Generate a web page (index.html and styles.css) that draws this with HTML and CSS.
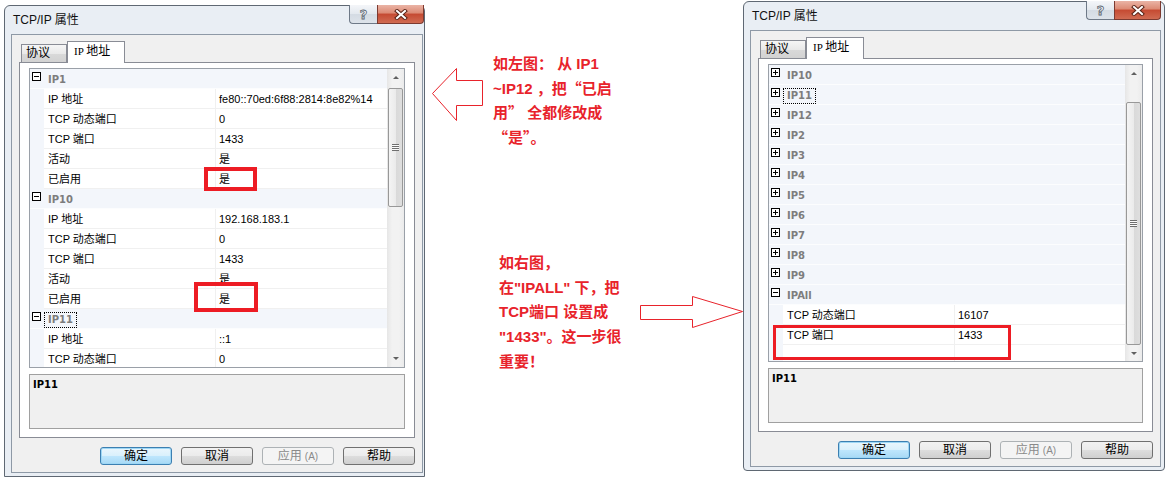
FILE: index.html
```html
<!DOCTYPE html>
<html lang="zh-CN">
<head>
<meta charset="utf-8">
<title>TCP/IP 属性</title>
<link rel="stylesheet" href="styles.css">
</head>
<body>
<div class="page">

  <div class="win win-l">
    <div class="titlebar">
      <span class="title-text">TCP/IP 属性</span>
      <div class="caps caps-l">
        <span class="cap cap-help">?</span>
        <span class="cap cap-close"><svg width="14" height="11" viewBox="0 0 14 11"><path d="M3 2 L11 9 M11 2 L3 9" stroke="#5a2418" stroke-width="4" stroke-linecap="square"/><path d="M3 2 L11 9 M11 2 L3 9" stroke="#fff" stroke-width="2" stroke-linecap="square"/></svg></span>
      </div>
    </div>
    <div class="frame frame-l">
      <div class="client">
        <div class="tabs">
          <div class="tab">协议</div>
          <div class="tab tab-sel"><span class="tab-lat">IP </span>地址</div>
        </div>
        <div class="tabpage">
          <div class="pg">
            <div class="pg-rows">
              <div class="row cat"><span class="exp minus"></span><span class="cat-label">IP1</span></div>
              <div class="row prop"><span class="m"></span><span class="k">IP 地址</span><span class="v">fe80::70ed:6f88:2814:8e82%14</span></div>
              <div class="row prop"><span class="m"></span><span class="k">TCP 动态端口</span><span class="v">0</span></div>
              <div class="row prop"><span class="m"></span><span class="k">TCP 端口</span><span class="v">1433</span></div>
              <div class="row prop"><span class="m"></span><span class="k">活动</span><span class="v">是</span></div>
              <div class="row prop"><span class="m"></span><span class="k">已启用</span><span class="v">是</span></div>
              <div class="row cat"><span class="exp minus"></span><span class="cat-label">IP10</span></div>
              <div class="row prop"><span class="m"></span><span class="k">IP 地址</span><span class="v">192.168.183.1</span></div>
              <div class="row prop"><span class="m"></span><span class="k">TCP 动态端口</span><span class="v">0</span></div>
              <div class="row prop"><span class="m"></span><span class="k">TCP 端口</span><span class="v">1433</span></div>
              <div class="row prop"><span class="m"></span><span class="k">活动</span><span class="v">是</span></div>
              <div class="row prop"><span class="m"></span><span class="k">已启用</span><span class="v">是</span></div>
              <div class="row cat"><span class="exp minus"></span><span class="cat-label focus">IP11</span></div>
              <div class="row prop"><span class="m"></span><span class="k">IP 地址</span><span class="v">::1</span></div>
              <div class="row prop"><span class="m"></span><span class="k">TCP 动态端口</span><span class="v">0</span></div>
            </div>
            <div class="sb">
              <div class="sb-btn"><span class="arr-up"></span></div>
              <div class="sb-track"><div class="thumb thumb-l"><span class="grip"></span></div></div>
              <div class="sb-btn"><span class="arr-down"></span></div>
            </div>
            <div class="mark mark-1"></div>
            <div class="mark mark-2"></div>
          </div>
          <div class="desc">IP11</div>
        </div>
        <div class="btns">
          <span class="btn btn-def">确定</span>
          <span class="btn">取消</span>
          <span class="btn btn-dis">应用<span class="acc">(A)</span></span>
          <span class="btn">帮助</span>
        </div>
      </div>
    </div>
  </div>

  <div class="notes">
    <svg class="arrows" width="318" height="477" viewBox="0 0 318 477">
      <polygon points="7.5,93.5 31.5,68.5 31.5,80.5 57.5,80.5 57.5,105.5 31.5,105.5 31.5,120.5" fill="#fff" stroke="#e8232b" stroke-width="1"/>
      <polygon points="215.5,305.5 267.5,305.5 267.5,296.5 317.5,311.5 267.5,327.5 267.5,319.5 215.5,319.5" fill="#fff" stroke="#e8232b" stroke-width="1"/>
    </svg>
    <p class="note note-l">如左图： 从 IP1<br>~IP12 ，把<span class="cj">“</span>已启<br>用<span class="cj">”</span> 全都修改成<br><span class="cj">“</span>是<span class="cj">”</span>。</p>
    <p class="note note-r">如右图，<br>在"IPALL" 下，把<br>TCP端口 设置成<br>"1433"。这一步很<br>重要！</p>
  </div>

  <div class="win win-r">
    <div class="titlebar">
      <span class="title-text">TCP/IP 属性</span>
      <div class="caps caps-r">
        <span class="cap cap-help">?</span>
        <span class="cap cap-close"><svg width="14" height="11" viewBox="0 0 14 11"><path d="M3 2 L11 9 M11 2 L3 9" stroke="#5a2418" stroke-width="4" stroke-linecap="square"/><path d="M3 2 L11 9 M11 2 L3 9" stroke="#fff" stroke-width="2" stroke-linecap="square"/></svg></span>
      </div>
    </div>
    <div class="frame frame-r">
      <div class="client">
        <div class="tabs">
          <div class="tab">协议</div>
          <div class="tab tab-sel"><span class="tab-lat">IP </span>地址</div>
        </div>
        <div class="tabpage">
          <div class="pg">
            <div class="pg-rows">
              <div class="row cat"><span class="exp plus"></span><span class="cat-label">IP10</span></div>
              <div class="row cat"><span class="exp plus"></span><span class="cat-label focus">IP11</span></div>
              <div class="row cat"><span class="exp plus"></span><span class="cat-label">IP12</span></div>
              <div class="row cat"><span class="exp plus"></span><span class="cat-label">IP2</span></div>
              <div class="row cat"><span class="exp plus"></span><span class="cat-label">IP3</span></div>
              <div class="row cat"><span class="exp plus"></span><span class="cat-label">IP4</span></div>
              <div class="row cat"><span class="exp plus"></span><span class="cat-label">IP5</span></div>
              <div class="row cat"><span class="exp plus"></span><span class="cat-label">IP6</span></div>
              <div class="row cat"><span class="exp plus"></span><span class="cat-label">IP7</span></div>
              <div class="row cat"><span class="exp plus"></span><span class="cat-label">IP8</span></div>
              <div class="row cat"><span class="exp plus"></span><span class="cat-label">IP9</span></div>
              <div class="row cat"><span class="exp minus"></span><span class="cat-label">IPAll</span></div>
              <div class="row prop"><span class="m"></span><span class="k">TCP 动态端口</span><span class="v">16107</span></div>
              <div class="row prop"><span class="m"></span><span class="k">TCP 端口</span><span class="v">1433</span></div>
              <div class="row prop blank"><span class="m"></span><span class="k"></span><span class="v"></span></div>
            </div>
            <div class="sb">
              <div class="sb-btn"><span class="arr-up"></span></div>
              <div class="sb-track"><div class="thumb thumb-r"><span class="grip"></span></div></div>
              <div class="sb-btn"><span class="arr-down"></span></div>
            </div>
            <div class="mark mark-3"></div>
          </div>
          <div class="desc">IP11</div>
        </div>
        <div class="btns">
          <span class="btn btn-def">确定</span>
          <span class="btn">取消</span>
          <span class="btn btn-dis">应用<span class="acc">(A)</span></span>
          <span class="btn">帮助</span>
        </div>
      </div>
    </div>
  </div>

</div>
</body>
</html>
```

FILE: styles.css
```css
* { box-sizing: border-box; }

body {
  margin: 0;
  background: #fff;
  font-family: "Liberation Sans", "Noto Sans CJK SC", sans-serif;
  font-size: 11px;
  color: #000;
}

.page {
  display: flex;
  align-items: flex-start;
  width: 1166px;
  height: 477px;
  overflow: hidden;
}

/* ---------- window ---------- */
.win {
  flex: none;
  border: 1px solid #5f6873;
  border-radius: 6px 6px 0 0;
  background: #e9eef4;
}
.win-l { width: 421px; margin: 5px 0 0 4px; }
.win-r { width: 422px; margin-top: 1px; border-radius: 6px 6px 4px 4px; }

.titlebar {
  height: 28px;
  display: flex;
  align-items: flex-start;
}
.title-text {
  margin: 7px 0 0 8px;
  font-size: 12px;
  line-height: 14px;
  color: #111;
}
.caps {
  margin-left: auto;
  margin-top: -1px;
  display: flex;
}
.caps-l { margin-right: 0; }
.caps-r { margin-right: 3px; }
.cap {
  height: 19px;
  display: flex;
  align-items: center;
  justify-content: center;
  border: 1px solid #6e7987;
  border-top: none;
}
.cap-help {
  width: 28px;
  border-radius: 0 0 0 4px;
  border-right: none;
  background: linear-gradient(#f4f6f9, #e3e8ee 50%, #d4dbe3 51%, #dde3ea);
  font-family: "DejaVu Sans", sans-serif;
  font-weight: bold;
  font-size: 13px;
  color: #f4f6f8;
  -webkit-text-stroke: 0.8px #5b6571;
}
.cap-close {
  width: 47px;
  border-radius: 0 0 4px 0;
  border-color: #7c3a30;
  background: linear-gradient(#eab4a6, #dc8a74 45%, #c54a32 50%, #d06b52);
}

.frame { padding: 0 1px 3px 6px; }
.frame-r { padding-right: 3px; }

.client {
  background: #f0f0f0;
  border: 1px solid #8e99a6;
  padding: 6px 7px 7px 7px;
}

/* ---------- tabs ---------- */
.tabs {
  display: flex;
  align-items: flex-end;
  height: 22px;
  padding-left: 2px;
  margin-bottom: -1px;
  position: relative;
  z-index: 1;
}
.tab {
  width: 46px;
  height: 18px;
  margin-bottom: 1px;
  border: 1px solid #898c95;
  border-bottom: none;
  background: linear-gradient(#f6f6f6, #e9e9e9 50%, #d9d9d9 51%, #d2d2d2);
  font-size: 12px;
  line-height: 16px;
  padding-left: 4px;
}
.tab-sel {
  width: 58px;
  height: 22px;
  margin-bottom: 0;
  background: #fff;
  line-height: 19px;
  padding-left: 6px;
}
.tab-lat { font-family: "Liberation Serif", serif; font-size: 11px; }

.tabpage {
  background: #fff;
  border: 1px solid #898c95;
  padding: 5px 9px 8px 9px;
  display: flex;
  flex-direction: column;
  gap: 6px;
}

/* ---------- property grid ---------- */
.pg {
  position: relative;
  height: 300px;
  border: 1px solid #9aa0a8;
  display: flex;
  background: #fff;
}
.win-r .pg { height: 298px; }
.pg-rows {
  flex: 1;
  overflow: hidden;
}
.row {
  height: 20px;
  display: flex;
}
.cat {
  background: #f3f6fb;
  border-bottom: 1px solid #fcfdfe;
  align-items: flex-start;
}
.exp {
  position: relative;
  flex: none;
  width: 9px;
  height: 9px;
  margin: 3px 0 0 2px;
  border: 1px solid #000;
  background: #fff;
}
.exp::before {
  content: "";
  position: absolute;
  left: 1px;
  top: 3px;
  width: 5px;
  height: 1px;
  background: #000;
}
.plus::after {
  content: "";
  position: absolute;
  left: 3px;
  top: 1px;
  width: 1px;
  height: 5px;
  background: #000;
}
.cat-label {
  margin: 3px 0 0 3px;
  padding: 0 3px;
  height: 16px;
  line-height: 14px;
  border: 1px dotted transparent;
  font-family: "DejaVu Sans", sans-serif;
  font-weight: bold;
  font-size: 10px;
  color: #7d7d7d;
}
.cat-label.focus { border-color: #000; }

.prop {
  display: grid;
  grid-template-columns: 14px 172px 1fr;
}
.prop .m { background: #f3f6fb; }
.prop .k,
.prop .v {
  border-bottom: 1px solid #f0f0f0;
  padding-top: 3px;
  line-height: 15px;
  white-space: nowrap;
  overflow: hidden;
}
.prop .k { border-right: 1px solid #f0f0f0; padding-left: 4px; }
.prop .v { padding-left: 3px; }
.blank { height: 16px; }
.blank .k, .blank .v { border-bottom: none; }

/* scrollbar */
.sb {
  flex: none;
  width: 17px;
  display: flex;
  flex-direction: column;
  background: linear-gradient(90deg, #e6e6e6, #f2f2f2 30%, #f2f2f2 70%, #ebebeb);
}
.sb-btn {
  flex: none;
  height: 17px;
  display: flex;
  align-items: center;
  justify-content: center;
}
.arr-up {
  border-left: 3px solid transparent;
  border-right: 3px solid transparent;
  border-bottom: 3px solid #606060;
}
.arr-down {
  border-left: 3px solid transparent;
  border-right: 3px solid transparent;
  border-top: 3px solid #606060;
}
.sb-track {
  flex: 1;
  display: flex;
  flex-direction: column;
  padding: 0 1px;
}
.thumb {
  flex: none;
  border: 1px solid #989898;
  border-radius: 2px;
  background: linear-gradient(90deg, #f4f4f4, #ebebeb 50%, #d9d9d9 51%, #dedede);
  display: flex;
  align-items: center;
  justify-content: center;
}
.thumb-l { margin-top: 2px; height: 119px; }
.thumb-r { margin-top: 20px; height: 243px; }
.grip {
  width: 7px;
  height: 7px;
  background: repeating-linear-gradient(#6f6f6f 0 1px, #fbfbfb 1px 2px);
}

.mark {
  position: absolute;
  border: 4px solid #ed1c24;
}
.mark-1 { left: 174px; top: 98px; width: 53px; height: 24px; }
.mark-2 { left: 164px; top: 213px; width: 64px; height: 30px; }
.mark-3 { left: 4px; top: 260px; width: 238px; height: 35px; border-width: 3px; }

.desc {
  height: 55px;
  background: #f0f0f0;
  border: 1px solid #a0a0a0;
  padding: 4px 3px;
  font-family: "DejaVu Sans", sans-serif;
  font-weight: bold;
  font-size: 10px;
  line-height: 12px;
}

/* ---------- buttons ---------- */
.btns {
  display: flex;
  justify-content: flex-end;
  gap: 9px;
  margin-top: 9px;
  padding-right: 0;
}
.btn {
  width: 72px;
  height: 18px;
  border: 1px solid #707070;
  border-radius: 3px;
  background: linear-gradient(#f2f2f2, #ebebeb 50%, #dddddd 51%, #cfcfcf);
  font-size: 12px;
  line-height: 16px;
  text-align: center;
  color: #000;
}
.btn-def {
  border-color: #3c7fb1;
  background: linear-gradient(#eaf6fd, #d9f0fc 50%, #bee6fd 51%, #a7d9f5);
  box-shadow: inset 0 0 0 1px #9ed7f5;
}
.btn-dis {
  border-color: #adb2b5;
  background: #f4f4f4;
  color: #8a8a8a;
}
.acc { font-size: 10px; margin-left: 3px; }

/* ---------- notes ---------- */
.notes {
  position: relative;
  flex: none;
  width: 318px;
  height: 477px;
}
.arrows { position: absolute; left: 0; top: 0; }
.note {
  position: absolute;
  margin: 0;
  font-family: "Liberation Sans", "Noto Sans CJK SC", sans-serif;
  font-weight: bold;
  font-size: 15px;
  color: #e8232b;
  white-space: nowrap;
}
.note-l { left: 68px; top: 52px; line-height: 23.5px; }
.note-r { left: 74px; top: 251px; line-height: 24.7px; }
.cj { font-family: "Noto Sans CJK SC", sans-serif; }
```
